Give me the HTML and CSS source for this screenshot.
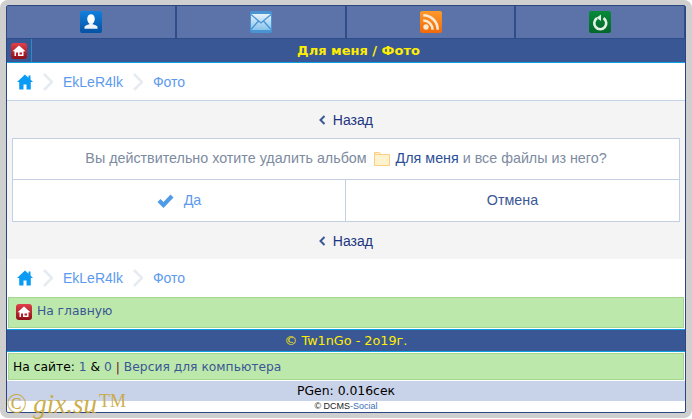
FILE: index.html
```html
<!DOCTYPE html>
<html lang="ru">
<head>
  <meta charset="UTF-8">
  <title>Для меня / Фото</title>
  <link rel="stylesheet" href="styles.css">
</head>
<body>
  <svg class="defs" width="0" height="0">
    <defs>
      <linearGradient id="gradBlue" x1="0" y1="0" x2="0" y2="1"><stop offset="0" stop-color="#1180dc"/><stop offset="1" stop-color="#0552a4"/></linearGradient>
      <linearGradient id="gradMail" x1="0" y1="0" x2="0" y2="1"><stop offset="0" stop-color="#e4f2fb"/><stop offset="1" stop-color="#88c4ec"/></linearGradient>
      <linearGradient id="gradRss" x1="0" y1="0" x2="0" y2="1"><stop offset="0" stop-color="#fb9a2c"/><stop offset="1" stop-color="#f26a08"/></linearGradient>
      <linearGradient id="gradGreen" x1="0" y1="0" x2="0" y2="1"><stop offset="0" stop-color="#068a38"/><stop offset="1" stop-color="#03682a"/></linearGradient>
      <linearGradient id="gradRed" x1="0" y1="0" x2="0" y2="1"><stop offset="0" stop-color="#e0404a"/><stop offset="1" stop-color="#8e0f18"/></linearGradient>
    </defs>
  </svg>
  <div class="frame">
    <div class="page">
      <div class="topnav">
        <a class="topnav-item"><svg class="app-icon" viewBox="0 0 22 22"><rect width="22" height="22" rx="2" fill="url(#gradBlue)"/><ellipse cx="11" cy="8" rx="3.800" ry="4.800" fill="#fff"/><path d="M9.300 11.500h3.400v1.700c2 .8 4.300 1.300 4.800 2.600v2H4.500v-2c.5-1.300 2.800-1.800 4.800-2.600z" fill="#eef3f8"/></svg></a>
        <a class="topnav-item"><svg class="app-icon" viewBox="0 0 22 22"><rect width="22" height="22" rx="2" fill="#4a94d4"/><rect x="1" y="3" width="20" height="16" fill="url(#gradMail)"/><path d="M1 3.500l10 8.500 10-8.500M1 18.500l7.500-8.500M21 18.500L13.500 10" fill="none" stroke="#4a94d4" stroke-width="1.300"/></svg></a>
        <a class="topnav-item"><svg class="app-icon" viewBox="0 0 22 22"><rect width="22" height="22" rx="2" fill="url(#gradRss)"/><circle cx="6" cy="16" r="2.700" fill="#fde8d2"/><path d="M3.300 9.500a9.200 9.200 0 0 1 9.200 9.200M3.300 4.300a14.400 14.400 0 0 1 14.400 14.400" fill="none" stroke="#fde8d2" stroke-width="2.600"/></svg></a>
        <a class="topnav-item"><svg class="app-icon" viewBox="0 0 22 22"><rect width="22" height="22" rx="2" fill="url(#gradGreen)"/><path d="M8 7.200a6 6 0 1 0 6.500 0" fill="none" stroke="#e6efe8" stroke-width="2.600"/><path d="M12 3.500v6.500l-4.500-3.200z" fill="#e6efe8"/></svg></a>
      </div>
      <div class="title-bar">
        <a class="title-home"><svg class="home-icon" viewBox="0 0 16 16"><rect width="16" height="16" rx="3" fill="url(#gradRed)"/><path d="M8 2.500L1.500 8.200h2V13h9V8.200h2z" fill="#fff"/><rect x="5" y="9.500" width="2" height="3.500" fill="#b81c28"/><rect x="8.500" y="9.500" width="2.500" height="2" fill="#b81c28"/></svg></a>
        <h1 class="title-text">Для меня / Фото</h1>
      </div>
      <div class="crumbs crumbs-top">
        <svg class="crumb-home" viewBox="0 0 16 16"><path d="M8 .500L0 8h2.200v7.500H6.500V10.500h3v5h4.300V8H16l-2.500-2.400V1.500h-2v2.200z" fill="#0a9bf5"/></svg>
        <svg class="crumb-sep" viewBox="0 0 10 18"><path d="M1 1l8 8-8 8" fill="none" stroke="#e6ebf2" stroke-width="2.500"/></svg>
        <a class="crumb-link">EkLeR4lk</a>
        <svg class="crumb-sep" viewBox="0 0 10 18"><path d="M1 1l8 8-8 8" fill="none" stroke="#e6ebf2" stroke-width="2.500"/></svg>
        <a class="crumb-link">Фото</a>
      </div>
      <div class="main">
        <a class="back-row"><svg class="back-arrow" viewBox="0 0 7 10"><path d="M5.500 1L1.500 5l4 4" fill="none" stroke="#3a5795" stroke-width="2"/></svg> Назад</a>
        <div class="confirm">
          <div class="confirm-text">Вы действительно хотите удалить альбом
            <svg class="folder" viewBox="0 0 16 15"><path d="M.500 14.500V1.500h5l1.500 2h8.500v11z" fill="#fff3cf" stroke="#fbcf83"/><path d="M.500 3.500H7" stroke="#fbcf83" fill="none"/></svg>
            <a class="confirm-name">Для меня</a> и все файлы из него?</div>
          <div class="confirm-actions">
            <a class="confirm-yes"><svg class="check" viewBox="0 0 16 14"><path d="M0 8l3-3 3 3 7-7.500 3 3L6 14z" fill="#4f9be8"/></svg> Да</a>
            <a class="confirm-no">Отмена</a>
          </div>
        </div>
        <a class="back-row"><svg class="back-arrow" viewBox="0 0 7 10"><path d="M5.500 1L1.500 5l4 4" fill="none" stroke="#3a5795" stroke-width="2"/></svg> Назад</a>
      </div>
      <div class="crumbs crumbs-bottom">
        <svg class="crumb-home" viewBox="0 0 16 16"><path d="M8 .500L0 8h2.200v7.500H6.500V10.500h3v5h4.300V8H16l-2.500-2.400V1.500h-2v2.200z" fill="#0a9bf5"/></svg>
        <svg class="crumb-sep" viewBox="0 0 10 18"><path d="M1 1l8 8-8 8" fill="none" stroke="#e6ebf2" stroke-width="2.500"/></svg>
        <a class="crumb-link">EkLeR4lk</a>
        <svg class="crumb-sep" viewBox="0 0 10 18"><path d="M1 1l8 8-8 8" fill="none" stroke="#e6ebf2" stroke-width="2.500"/></svg>
        <a class="crumb-link">Фото</a>
      </div>
      <div class="green-box green-home">
        <svg class="home-icon" viewBox="0 0 16 16"><rect width="16" height="16" rx="3" fill="url(#gradRed)"/><path d="M8 2.500L1.500 8.200h2V13h9V8.200h2z" fill="#fff"/><rect x="5" y="9.500" width="2" height="3.500" fill="#b81c28"/><rect x="8.500" y="9.500" width="2.500" height="2" fill="#b81c28"/></svg>
        <a class="green-link">На главную</a>
      </div>
      <div class="copy-bar">© Tw1nGo - 2o19г.</div>
      <div class="green-box green-online">На сайте: <a class="green-link">1</a> &amp; <a class="green-link">0</a> <span class="pipe">|</span> <a class="green-link">Версия для компьютера</a></div>
      <div class="pgen">PGen: 0.016сек</div>
      <div class="engine">© <span class="engine-a">DCMS</span><span class="engine-b">-Social</span></div>
    </div>
    <div class="watermark">© gix.su<sup class="tm">TM</sup></div>
  </div>
</body>
</html>
```

FILE: styles.css
```css
* {
  box-sizing: border-box;
}

html, body {
  margin: 0;
  padding: 0;
  height: 419px;
  overflow: hidden;
  background: #fff;
}

body {
  font-family: "Liberation Sans", Arial, sans-serif;
  font-size: 14px;
  color: #000;
}

.defs {
  position: absolute;
}

.frame {
  position: relative;
  width: 692px;
  height: 418px;
  background: #fff;
  border: solid #cfcfcf;
  border-width: 5px 6px 5px 6px;
  border-radius: 8px;
}

.page {
  height: 100%;
  border: 1px solid #2b4681;
  border-radius: 2px;
  background: #fff;
  overflow: hidden;
}

/* top icons */
.topnav {
  display: grid;
  grid-template-columns: 169px 169px 168px 1fr;
  height: 32px;
  background: #2f4d8a;
  gap: 1px;
}

.topnav-item {
  display: flex;
  justify-content: center;
  align-items: center;
  background: #5c73aa;
  border-right: 1px solid #2f4d8a;
  padding-bottom: 1px;
}

.app-icon {
  width: 22px;
  height: 22px;
}

.title-bar {
  display: flex;
  height: 25px;
  background: #3a5795;
  border-top: 1px solid #2f4d8a;
  border-bottom: 1px solid #10a0e0;
}

.title-home {
  display: flex;
  align-items: center;
  justify-content: center;
  width: 25px;
  border-right: 1px solid #2291c8;
}

.home-icon {
  width: 16px;
  height: 16px;
}

.title-text {
  flex: 1;
  margin: 0;
  text-align: center;
  font-family: "DejaVu Sans", sans-serif;
  font-size: 13px;
  line-height: 23px;
  font-weight: bold;
  color: #ffee00;
}

.crumbs {
  display: flex;
  align-items: center;
  background: #fff;
  padding-left: 10px;
  height: 38px;
}

.crumbs-top {
  border-bottom: 1px solid #c3d4e6;
}

.crumb-home {
  width: 16px;
  height: 16px;
}

.crumb-sep {
  width: 10px;
  height: 18px;
  margin: 0 10px;
}

.crumb-link {
  color: #5d9aee;
  font-size: 14px;
}

.main {
  background: #f4f4f4;
  padding: 0 5px;
}

.back-row {
  display: block;
  height: 37px;
  line-height: 38px;
  text-align: center;
  color: #1c3580;
  font-size: 14px;
}

.back-arrow {
  width: 7px;
  height: 10px;
  margin-right: 3px;
}

.confirm {
  background: #fff;
  border: 1px solid #c4d0e2;
}

.confirm-text {
  height: 41px;
  line-height: 39px;
  text-align: center;
  font-size: 14.3px;
  color: #7d8ba0;
  border-bottom: 1px solid #c4d0e2;
}

.folder {
  width: 16px;
  height: 15px;
  margin: 0 2px 0 3px;
  vertical-align: -3px;
}

.confirm-name {
  color: #2c4f96;
}

.confirm-actions {
  display: grid;
  grid-template-columns: 1fr 1fr;
  height: 41px;
}

.confirm-yes, .confirm-no {
  text-align: center;
  line-height: 41px;
  font-size: 14.3px;
}

.confirm-yes {
  color: #5d9aee;
  border-right: 1px solid #c4d0e2;
}

.confirm-no {
  color: #3a5795;
}

.check {
  width: 17px;
  height: 14px;
  margin-right: 6px;
  vertical-align: -3px;
}

.green-box {
  margin: 0 1px;
  background: #bde8ac;
  border: 1px solid #a5d88e;
  color: #000;
  font-family: "DejaVu Sans", sans-serif;
  font-size: 12.3px;
  padding-left: 4px;
  display: block;
}

.green-home {
  height: 31px;
  line-height: 27px;
  padding-left: 7px;
}

.green-home .home-icon {
  vertical-align: -5px;
  margin-right: 1px;
}

.green-online {
  height: 27px;
  line-height: 26px;
  margin-top: 1px;
}

.green-link {
  color: #3a5795;
}

.pipe {
  color: #6b0f20;
}

.copy-bar {
  height: 23px;
  margin-top: 1px;
  background: #3a5795;
  border-top: 1px solid #10a0e0;
  border-bottom: 1px solid #10a0e0;
  color: #ffee00;
  font-family: "DejaVu Sans", sans-serif;
  font-size: 12.8px;
  line-height: 21px;
  text-align: center;
}

.pgen {
  height: 20px;
  margin-top: 1px;
  background: #c8d2e8;
  font-family: "DejaVu Sans", sans-serif;
  font-size: 12.4px;
  line-height: 20px;
  text-align: center;
}

.engine {
  text-align: center;
  font-size: 9px;
  line-height: 11px;
  color: #222;
}

.engine-a {
  color: #222;
}

.engine-b {
  color: #3a70b5;
}

/* sits over the footer */
.watermark {
  position: absolute;
  left: 0;
  top: 386px;
  color: rgba(200, 165, 50, 0.9);
  font-family: "Liberation Serif", serif;
  font-style: italic;
  font-size: 27px;
  line-height: 26px;
  white-space: nowrap;
  pointer-events: none;
}

.tm {
  font-style: normal;
  font-size: 18px;
  vertical-align: 6px;
  line-height: 0;
  margin-left: 2px;
}
```
